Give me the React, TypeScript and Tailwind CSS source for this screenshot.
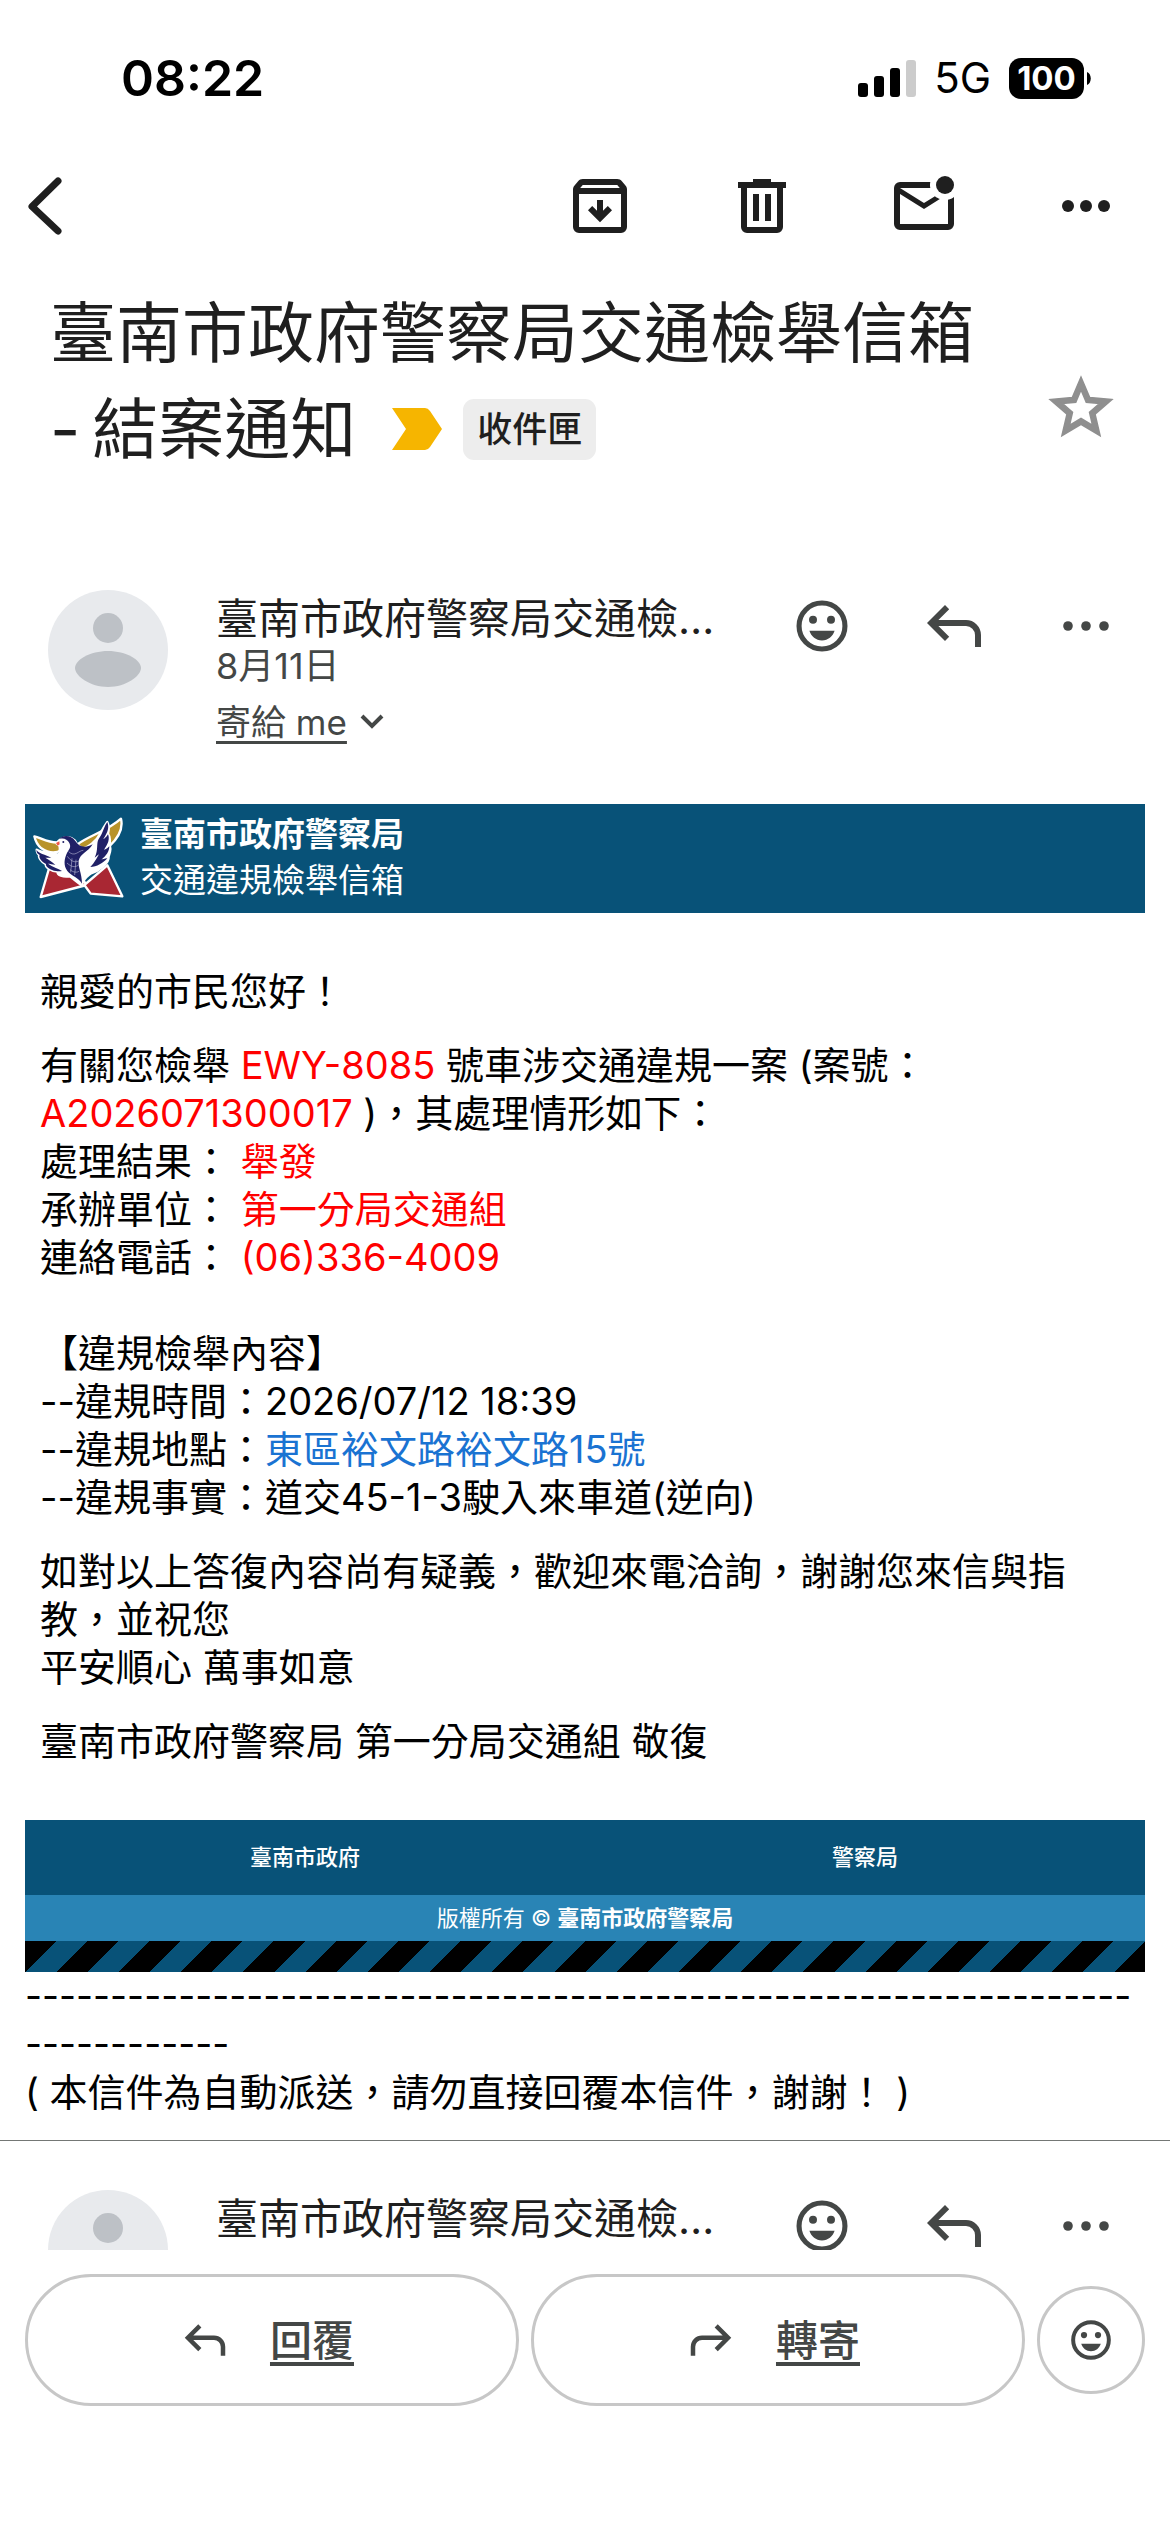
import { ReactNode } from "react";

const fonts = "font-[Inter,'Noto_Sans_CJK_TC',sans-serif]";

const Icon = ({ className = "size-[72px]", children }: { className?: string; children: ReactNode }) => (
  <svg viewBox="0 0 24 24" fill="currentColor" className={`shrink-0 ${className}`} aria-hidden="true">
    {children}
  </svg>
);

const BackIcon = () => (
  <svg viewBox="0 0 36 60" className="h-[60px] w-[36px]" fill="none" stroke="currentColor" strokeWidth="7" strokeLinecap="round" strokeLinejoin="round" aria-hidden="true">
    <path d="M31 5L5 30.500L31 55" />
  </svg>
);

const ArchiveIcon = () => (
  <Icon>
    <path d="M5 21q-.825 0-1.413-.587T3 19V6.525q0-.35.113-.675t.337-.6L4.7 3.725q.275-.35.687-.538T6.25 3h11.5q.45 0 .863.188t.687.537l1.25 1.525q.225.275.338.6t.112.675V19q0 .825-.587 1.413T19 21zm.4-15h13.2l-.85-1H6.25zM5 19h14V8H5zM12 17.4l4-4-1.4-1.4-1.6 1.6V10h-2v3.600l-1.6-1.6L8 13.400z" fillRule="evenodd" />
  </Icon>
);

const TrashIcon = () => (
  <Icon>
    <path d="M7 21q-.825 0-1.412-.587T5 19V6H4V4h5V3h6v1h5v2h-1v13q0 .825-.587 1.413T17 21zM17 6H7v13h10zM9 17h2V8H9zm4 0h2V8h-2z" />
  </Icon>
);

const UnreadIcon = () => (
  <Icon>
    <path d="M4 20q-.825 0-1.412-.587T2 18V6q0-.825.588-1.412T4 4h10.100q-.1.500-.1 1t.1 1H4l8 5 3.650-2.275q.350.325.763.563t.862.412L12 13 4 8v10h16V9.900q.575-.125 1.075-.350T22 9v9q0 .825-.587 1.413T20 20z" />
    <circle cx="19" cy="5" r="3" />
  </Icon>
);

const MoreIcon = ({ r = 2 }: { r?: number }) => (
  <Icon>
    <circle cx="6" cy="12" r={r} />
    <circle cx="12" cy="12" r={r} />
    <circle cx="18" cy="12" r={r} />
  </Icon>
);

const StarIcon = () => (
  <Icon className="size-[74px]">
    <path stroke="currentColor" strokeWidth="0.500" d="M22 9.240l-7.190-.620L12 2 9.190 8.630 2 9.240l5.460 4.730L5.820 21 12 17.270 18.180 21l-1.630-7.030L22 9.240zM12 15.400l-3.760 2.270 1-4.280-3.320-2.880 4.380-.380L12 6.100l1.710 4.040 4.380.380-3.320 2.880 1 4.280L12 15.400z" />
  </Icon>
);

const SmileIcon = ({ className }: { className?: string }) => (
  <Icon className={className}>
    <circle cx="12" cy="12" r="7.650" fill="none" stroke="currentColor" strokeWidth="1.700" />
    <circle cx="9" cy="9.900" r="1.330" />
    <circle cx="15" cy="9.900" r="1.330" />
    <path d="M7.800 13.600h8.400c-.6 1.900-2.200 3.200-4.200 3.200s-3.600-1.300-4.200-3.200z" />
  </Icon>
);

const ReplyIcon = ({ className }: { className?: string }) => (
  <Icon className={className}>
    <path d="M19 19v-4q0-1.250-.875-2.125T16 12H6.800l3.600 3.600L9 17l-6-6 6-6 1.400 1.400L6.800 10H16q2.075 0 3.538 1.463T21 15v4z" />
  </Icon>
);

const DoveLogo = () => (
  <svg viewBox="36 46 276 252" className="h-[84px] w-[92px] shrink-0" role="img" aria-label="臺南市政府警察局">
    <g stroke="#fff" strokeWidth="7" strokeLinejoin="round">
      <path d="M88 203L62 292L200 256L160 200z" fill="#a92733" />
      <path d="M193 256L262 197L307 290L212 282z" fill="#a92733" />
      <path d="M43 110C62 114 88 132 118 128L124 152C105 162 82 158 64 146C54 138 46 124 43 110z" fill="#b8932a" />
      <path d="M172 134C215 104 262 94 303 57C309 82 298 112 268 140L190 150z" fill="#b8932a" />
      <path d="M50 150C58 158 92 160 118 165C118 155 122 148 118 138L110 132C118 116 146 104 164 122C172 132 172 142 178 148C204 146 230 124 244 96C250 84 256 76 262 67C270 82 266 94 264 102C272 112 270 130 268 136C276 146 268 164 266 170C268 190 238 214 212 222C202 230 188 238 186 258C174 250 160 238 150 230C128 234 112 226 112 216C92 214 74 202 78 194C62 186 54 172 58 166C50 160 50 156 50 150z" fill="#fff" />
    </g>
    <g fill="#202066">
      <path d="M50 150C52 160 78 165 94 174C86 174 80 174 76 174C88 182 98 186 106 196C98 194 88 192 84 192C98 202 114 206 126 214C116 216 110 214 108 214C92 212 76 202 78 193C64 186 55 173 59 166C50 160 49 156 50 150z" />
      <path d="M262 67C252 80 250 98 236 118C228 132 236 150 224 174C244 158 240 164 244 148C234 172 222 190 211 202C230 202 250 190 262 176C254 176 246 180 244 180C260 168 268 154 268 140C260 148 254 150 252 150C264 134 270 118 264 104C258 114 252 118 250 118C264 96 268 84 262 67z" />
      <path d="M117 118C130 104 154 106 166 124C176 140 194 148 218 134C204 158 180 162 176 184C174 206 186 220 186 252C178 236 154 228 142 214C130 198 132 178 142 158C148 148 154 142 148 130C142 118 130 114 117 118z" />
    </g>
    <path d="M146 156C164 174 176 152 190 152M142 170C152 184 164 190 176 184M141 190C154 202 164 204 176 196M150 210C160 218 170 220 178 214M156 176L152 218M168 180L164 226" fill="none" stroke="#d7d7ea" strokeWidth="1.500" />
    <path d="M108 130L118 125L119 134L113 138z" fill="#ef5545" />
    <circle cx="130" cy="127" r="3" fill="#202066" />
  </svg>
);

const StatusBar = () => (
  <div className="flex h-[156px] shrink-0 items-center justify-between pl-[121px] pr-[79px] text-black">
    <span className="text-[50px] font-semibold leading-none">08:22</span>
    <div className="flex items-center">
      <svg viewBox="0 0 58 38" className="h-[38px] w-[58px]" aria-hidden="true">
        <rect x="0" y="24" width="10" height="14" rx="3" />
        <rect x="16" y="17" width="10" height="21" rx="3" />
        <rect x="32" y="9" width="10" height="29" rx="3" />
        <rect x="48" y="1" width="10" height="37" rx="3" fill="#ccc" />
      </svg>
      <span className="ml-[18px] text-[42px] leading-none">5G</span>
      <span className="ml-[18px] flex h-[41px] w-[75px] items-center justify-center rounded-[12px] bg-black text-[33px] font-bold leading-none text-white">
        100
      </span>
      <svg viewBox="0 0 4 13" className="ml-[3px] h-[13px] w-[4px]" aria-hidden="true">
        <path d="M0 0C5 2 5 11 0 13z" />
      </svg>
    </div>
  </div>
);

const Toolbar = () => (
  <nav className="flex shrink-0 items-center pl-[27px] pr-12 pt-[14px] text-[#1f1f1f]">
    <button type="button" aria-label="返回"><BackIcon /></button>
    <div className="ml-auto flex gap-[90px]">
      <button type="button" aria-label="封存"><ArchiveIcon /></button>
      <button type="button" aria-label="刪除"><TrashIcon /></button>
      <button type="button" aria-label="標示為未讀"><UnreadIcon /></button>
      <button type="button" aria-label="更多"><MoreIcon /></button>
    </div>
  </nav>
);

const Sender = () => (
  <div className="flex items-start px-12 text-[#444746]">
    <svg viewBox="0 0 120 120" className="size-[120px] shrink-0" aria-hidden="true">
      <circle cx="60" cy="60" r="60" fill="#e8eaed" />
      <circle cx="60" cy="38" r="15" fill="#bdc1c6" />
      <path d="M60 61c18 0 33 9 33 17c0 8-15 19-33 19s-33-11-33-19c0-8 15-17 33-17z" fill="#bdc1c6" />
    </svg>
    <div className="ml-12 min-w-0 flex-1 pt-1">
      <p className="truncate text-[42px] leading-[50px] text-[#1f1f1f]">臺南市政府警察局交通檢舉信箱</p>
      <p className="text-[36px] leading-[44px]">8月11日</p>
      <button type="button" className="mt-3 flex items-center text-[35px] leading-[44px]">
        <span className="underline decoration-[3px] underline-offset-[6px]">寄給 me</span>
        <svg viewBox="0 0 24 16" className="ml-[13px] h-[16px] w-[24px]" fill="none" stroke="currentColor" strokeWidth="4" aria-hidden="true">
          <path d="M2 2L12 12L22 2" />
        </svg>
      </button>
    </div>
    <div className="ml-15 flex gap-15">
      <button type="button" aria-label="新增回應"><SmileIcon /></button>
      <button type="button" aria-label="回覆"><ReplyIcon /></button>
      <button type="button" aria-label="更多"><MoreIcon r={1.6} /></button>
    </div>
  </div>
);

const Letter = () => (
  <article className="mx-[25px] mt-15 text-black">
    <header className="flex items-center gap-4 bg-[#085278] pb-[10px] pl-[7px] pt-[7px] text-[33px] leading-[46px] text-white">
      <DoveLogo />
      <div>
        <p className="font-bold">臺南市政府警察局</p>
        <p>交通違規檢舉信箱</p>
      </div>
    </header>

    <div className="space-y-[26px] px-[15px] pb-[55px] pt-[54px] text-[38px] leading-[48px]">
      <p>親愛的市民您好！</p>
      <p>
        有關您檢舉 <span className="text-[#f00]">EWY-8085</span> 號車涉交通違規一案 (案號：
        <br />
        <span className="text-[#f00]">A2026071300017</span> )，其處理情形如下：
        <br />
        處理結果： <span className="text-[#f00]">舉發</span>
        <br />
        承辦單位： <span className="text-[#f00]">第一分局交通組</span>
        <br />
        連絡電話： <span className="text-[#f00]">(06)336-4009</span>
        <br />
        <br />
        【違規檢舉內容】
        <br />
        --違規時間：2026/07/12 18:39
        <br />
        --違規地點：<a href="#" className="text-[#1a73d2]">東區裕文路裕文路15號</a>
        <br />
        --違規事實：道交45-1-3駛入來車道(逆向)
      </p>
      <p>
        如對以上答復內容尚有疑義，歡迎來電洽詢，謝謝您來信與指教，並祝您
        <br />
        平安順心 萬事如意
      </p>
      <p>臺南市政府警察局 第一分局交通組 敬復</p>
    </div>

    <footer className="text-center text-[22px] text-white">
      <div className="grid grid-cols-2 bg-[#085278] font-medium leading-[75px]">
        <a href="#">臺南市政府</a>
        <a href="#">警察局</a>
      </div>
      <p className="bg-[#2984b5] leading-[46px]">
        版權所有 © <b>臺南市政府警察局</b>
      </p>
      <div className="h-[31px] bg-[repeating-linear-gradient(135deg,#000_0_22px,#085278_22px_44px)]" />
    </footer>

    <div className="leading-[48px]">
      <p className="break-all text-[37px]">{"-".repeat(77)}</p>
      <p className="text-[38px]">( 本信件為自動派送，請勿直接回覆本信件，謝謝！ )</p>
    </div>
  </article>
);

const ReplyBar = () => (
  <div className="flex shrink-0 items-center gap-3 px-[25px] pb-[126px] pt-6 text-[42px] font-medium text-[#444746]">
    <button type="button" className="flex h-[132px] flex-1 items-center justify-center gap-[38px] rounded-full border-[3px] border-[#c7c7c7] pr-3">
      <ReplyIcon className="size-[54px]" />
      <span className="underline decoration-[4px] underline-offset-[6px]">回覆</span>
    </button>
    <button type="button" className="flex h-[132px] flex-1 items-center justify-center gap-[38px] rounded-full border-[3px] border-[#c7c7c7] pr-3">
      <ReplyIcon className="size-[54px] -scale-x-100" />
      <span className="underline decoration-[4px] underline-offset-[6px]">轉寄</span>
    </button>
    <button type="button" aria-label="新增回應" className="flex size-[108px] items-center justify-center rounded-full border-[3px] border-[#c7c7c7]">
      <SmileIcon className="size-[56px]" />
    </button>
  </div>
);

export default function App() {
  return (
    <div lang="zh-Hant" className={`flex h-screen flex-col bg-white ${fonts}`}>
      <StatusBar />
      <Toolbar />
      <main className="min-h-0 flex-1 overflow-y-auto [scrollbar-width:none]">
        <div className="flex items-end justify-between pl-[50px] pr-[52px] pt-[43px]">
          <h1 className="text-[66px] leading-[96px] text-[#1f1f1f]">
            臺南市政府警察局交通檢舉信箱
            <br />
            <span className="flex items-center">
              <span className="mr-3">-</span>
              結案通知
              <svg viewBox="0 0 50 42" className="ml-9 h-[42px] w-[50px]" aria-hidden="true">
                <path d="M0 0H33Q36 0 38 3L50 21L38 39Q36 42 33 42H0L14 21z" fill="#f6b500" />
              </svg>
              <span className="ml-[21px] rounded-[11px] bg-[#ededed] px-[14px] text-[35px] font-medium leading-[61px]">收件匣</span>
            </span>
          </h1>
          <button type="button" aria-label="加上星號" className="mb-8 text-[#8f8f8f]"><StarIcon /></button>
        </div>
        <div className="pt-[113px]"><Sender /></div>
        <Letter />
        <div className="mt-6 border-t border-[#747775] pt-[49px]"><Sender /></div>
      </main>
      <ReplyBar />
    </div>
  );
}
